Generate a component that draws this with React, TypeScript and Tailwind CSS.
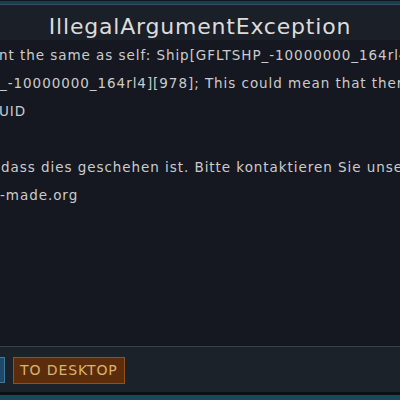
export default function App() {
  const font = { fontFamily: '"DejaVu Sans", "Noto Sans", sans-serif' };
  return (
    <div className="w-[400px] h-[400px] overflow-hidden flex flex-col bg-[#151820]" style={font}>
      <div className="h-[1px] bg-[#0e1820]" />
      <div className="h-[3px] bg-[#1c3b4c]" />
      <div className="h-[1px] bg-[#2a5466]" />
      <div className="h-[35px] bg-[#1a1f28] flex items-center justify-center pt-[9px]">
        <span className="text-[22px] leading-none text-[#dcdcdc] tracking-[0.8px]">IllegalArgumentException</span>
      </div>
      <div className="flex-1 bg-[#151820] pt-[1px] text-[13.5px] leading-[28px] text-[#cccccc] tracking-[0.95px] whitespace-nowrap overflow-hidden">
        <div className="-ml-[1px]">nt the same as self: Ship[GFLTSHP_-10000000_164rl4</div>
        <div>_-10000000_164rl4][978]; This could mean that there</div>
        <div className="-ml-[1px]">UID</div>
        <div>&nbsp;</div>
        <div className="ml-[1px]">dass dies geschehen ist. Bitte kontaktieren Sie unsere</div>
        <div>-made.org</div>
      </div>
      <div className="h-[1px] bg-[#3b404b]" />
      <div className="h-[45px] bg-[#1c222a] flex items-center gap-[8px] pt-[1px]">
        <div className="w-[5px] h-[26px] bg-[#1e4a68] border border-[#3c7aa0] border-l-0" />
        <div className="h-[27px] px-[6px] flex items-center bg-[#5c2d0c] border border-[#9a4e18] text-[#d8b46c] text-[14px] tracking-[0.9px]">
          TO DESKTOP
        </div>
      </div>
      <div className="h-[3px] bg-[#0c1015]" />
      <div className="h-[5px] bg-[#1b4858]" />
    </div>
  );
}
